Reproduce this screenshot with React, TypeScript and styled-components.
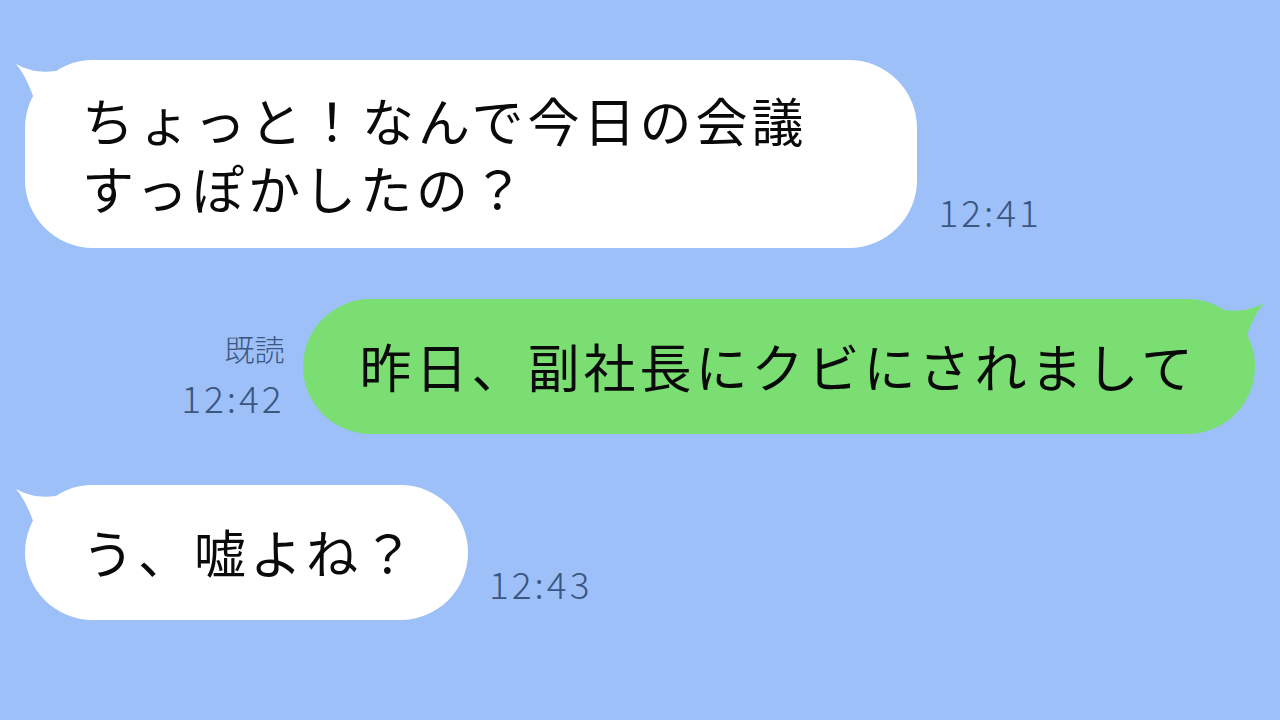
import React from "react";
import styled, { createGlobalStyle } from "styled-components";

const Global = createGlobalStyle`
  html, body { margin: 0; padding: 0; }
  body { background: #9ec0f8; }
`;

const Screen = styled.div`
  width: 1280px;
  height: 720px;
  background: #9ec0f8;
  box-sizing: border-box;
  padding: 60px 25px 0 25px;
  display: flex;
  flex-direction: column;
  gap: 51px;
  font-family: "Noto Sans CJK JP", "Noto Sans", sans-serif;
  overflow: hidden;
`;

const Row = styled.div<{ $mine?: boolean }>`
  display: flex;
  align-items: flex-end;
  justify-content: ${(p) => (p.$mine ? "flex-end" : "flex-start")};
  gap: ${(p) => (p.$mine ? "18px" : "21px")};
`;

const Bubble = styled.div<{ $mine?: boolean; $padR?: number; $padL?: number; $padV?: number }>`
  position: relative;
  background: ${(p) => (p.$mine ? "#7ade72" : "#ffffff")};
  border-radius: 68px;
  padding: ${(p) => p.$padV ?? 33}px ${(p) => p.$padR ?? 60}px ${(p) => p.$padV ?? 34}px
    ${(p) => p.$padL ?? 57}px;
  color: #0a0a0a;
  font-size: 52px;
  line-height: 68px;
  letter-spacing: 4px;
  white-space: pre;
`;

const Tail = styled.svg<{ $mine?: boolean }>`
  position: absolute;
  top: 3px;
  ${(p) => (p.$mine ? "right: -10px;" : "left: -10px;")}
  width: 60px;
  height: 40px;
`;

const Meta = styled.div`
  display: flex;
  flex-direction: column;
  align-items: flex-end;
  color: #3b5680;
  margin-bottom: 10px;
`;

const Read = styled.span`
  font-size: 30px;
  line-height: 44px;
  font-weight: 300;
`;

const Time = styled.span`
  font-family: "Noto Sans CJK JP", "Noto Sans", sans-serif;
  font-size: 37px;
  line-height: 54px;
  letter-spacing: 3px;
  font-weight: 300;
`;

const LeftTail = ({ color }: { color: string }) => (
  <Tail viewBox="0 0 60 40">
    <path d="M1 1 C 14 8, 26 10, 40 8 L 58 30 L 20 38 C 14 22, 10 12, 1 1 Z" fill={color} />
  </Tail>
);

const RightTail = ({ color }: { color: string }) => (
  <Tail $mine viewBox="0 0 60 40">
    <path d="M59 1 C 46 8, 34 10, 20 8 L 2 30 L 40 38 C 46 22, 50 12, 59 1 Z" fill={color} />
  </Tail>
);

export default function App() {
  return (
    <>
      <Global />
      <Screen>
        <Row>
          <Bubble $padR={110} $padV={26}>
            <LeftTail color="#ffffff" />
            {"ちょっと！なんで今日の会議\nすっぽかしたの？"}
          </Bubble>
          <Meta>
            <Time>12:41</Time>
          </Meta>
        </Row>
        <Row $mine>
          <Meta>
            <Read>既読</Read>
            <Time>12:42</Time>
          </Meta>
          <Bubble $mine $padL={57} $padR={58}>
            <RightTail color="#7ade72" />
            昨日、副社長にクビにされまして
          </Bubble>
        </Row>
        <Row>
          <Bubble $padR={50}>
            <LeftTail color="#ffffff" />
            う、嘘よね？
          </Bubble>
          <Meta>
            <Time>12:43</Time>
          </Meta>
        </Row>
      </Screen>
    </>
  );
}
